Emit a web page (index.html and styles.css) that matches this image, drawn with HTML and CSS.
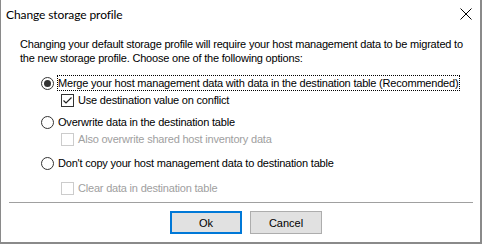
FILE: index.html
```html
<!DOCTYPE html>
<html lang="en">
<head>
  <meta charset="UTF-8" />
  <title>Change storage profile</title>
  <link rel="stylesheet" href="styles.css">
</head>
<body>
  <div class="dialog">
    <div class="title-bar">
      <div class="title">Change storage profile</div>
      <div class="close">
        <svg width="12" height="12" viewBox="0 0 12 12">
          <path d="M0.5 0.5 L11.5 11.5 M11.5 0.5 L0.5 11.5" stroke="#000" stroke-width="1" fill="none"/>
        </svg>
      </div>
    </div>

    <div class="content">
      <p class="intro">Changing your default storage profile will require your host management data to be migrated to the new storage profile. Choose one of the following options:</p>

      <!-- option 1 -->
      <div class="option row-1">
        <span class="radio checked"></span>
        <span class="label focused">Merge your host management data with data in the destination table (Recommended)</span>
      </div>
      <div class="sub row-2">
        <span class="check">
          <svg width="11" height="11" viewBox="0 0 11 11">
            <path d="M1.5 5.5 L4 8 L9.5 2.5" stroke="#222" stroke-width="1.2" fill="none"/>
          </svg>
        </span>
        <span class="label">Use destination value on conflict</span>
      </div>

      <!-- option 2 -->
      <div class="option row-3">
        <span class="radio"></span>
        <span class="label">Overwrite data in the destination table</span>
      </div>
      <div class="sub row-4 disabled">
        <span class="check"></span>
        <span class="label">Also overwrite shared host inventory data</span>
      </div>

      <!-- option 3 -->
      <div class="option row-5">
        <span class="radio"></span>
        <span class="label">Don't copy your host management data to destination table</span>
      </div>
      <div class="sub row-6 disabled">
        <span class="check"></span>
        <span class="label">Clear data in destination table</span>
      </div>
    </div>

    <div class="separator"></div>

    <div class="buttons">
      <button class="btn default">Ok</button>
      <button class="btn">Cancel</button>
    </div>
  </div>
</body>
</html>
```

FILE: styles.css
```css
body {
    margin: 0;
    background: #fff;
    font-family: "Liberation Sans", Arial, sans-serif;
    font-size: 11px;
    letter-spacing: -0.2px;
    color: #000;
}
.dialog {
    width: 482px;
    height: 244px;
    box-sizing: border-box;
    border-left: 1px solid #8a8a8a;
    border-right: 2px solid #8a8a8a;
    border-bottom: 2px solid #8a8a8a;
    background: #fff;
}
.title-bar {
    height: 27px;
    display: flex;
    align-items: center;
    justify-content: space-between;
}
.title {
    font-family: "Lato", "Liberation Sans", sans-serif;
    font-size: 12px;
    letter-spacing: -0.1px;
    padding-left: 5px;
    padding-top: 1px;
}
.close {
    width: 12px;
    height: 12px;
    margin-right: 8px;
    margin-top: 1px;
}
.close svg {
    display: block;
}
.content {
    padding-left: 19px;
}
.intro {
    margin: 10px 0 0 0;
    width: 448px;
    line-height: 14px;
}
.option,
.sub {
    display: flex;
    align-items: center;
    height: 16px;
}
.option {
    padding-left: 21px;
}
.sub {
    padding-left: 41px;
}
.row-1 { margin-top: 10px; }
.row-2 { margin-top: 1px; }
.row-3 { margin-top: 6px; }
.row-4 { margin-top: 1px; }
.row-5 { margin-top: 8px; }
.row-6 { margin-top: 9px; }

.radio {
    width: 11px;
    height: 11px;
    border: 1px solid #333;
    border-radius: 50%;
    display: flex;
    align-items: center;
    justify-content: center;
    margin-right: 4px;
    flex-shrink: 0;
}
.radio.checked::after {
    content: "";
    width: 7px;
    height: 7px;
    border-radius: 50%;
    background: #333;
}
.check {
    width: 11px;
    height: 11px;
    border: 1px solid #333;
    background: #fff;
    margin-right: 4px;
    flex-shrink: 0;
    display: flex;
    align-items: center;
    justify-content: center;
}
.check svg {
    display: block;
}
.label {
    line-height: 14px;
    white-space: nowrap;
}
.label.focused {
    outline: 1px dotted #000;
    outline-offset: 0;
    padding: 0 1px 0 0;
}
.disabled .label {
    color: #a0a0a0;
}
.disabled .check {
    border-color: #cccccc;
}
.separator {
    height: 1px;
    background: #a0a0a0;
    margin: 6px 7px 0 8px;
}
.buttons {
    display: flex;
    gap: 8px;
    padding-left: 169px;
    margin-top: 8px;
}
.btn {
    width: 72px;
    height: 23px;
    box-sizing: border-box;
    background: #e1e1e1;
    border: 1px solid #adadad;
    font-family: "Liberation Sans", Arial, sans-serif;
    font-size: 11px;
    color: #000;
    padding: 0;
}
.btn.default {
    border: 2px solid #0078d7;
}
```
